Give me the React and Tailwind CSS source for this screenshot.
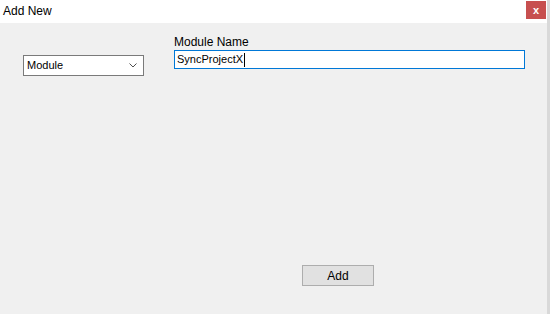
export default function App() {
  return (
    <div className="flex w-[550px] h-[314px] overflow-hidden font-['Liberation_Sans',Arial,sans-serif] text-black">
      <div className="flex flex-1 flex-col">
        <div className="flex h-[23px] items-start justify-between bg-white">
          <div className="pl-[3px] pt-[4px] text-[12px] leading-[15px]">Add New</div>
          <div className="mr-[1px] mt-[1px] flex h-[18px] w-[20px] items-center justify-center bg-[#c75050] text-[11px] font-bold leading-none text-white">
            x
          </div>
        </div>
        <div className="flex flex-1 flex-col bg-[#f0f0f0]">
          <div className="flex pl-[23px] pt-[11px]">
            <div className="mt-[21px] flex h-[21px] w-[121px] items-center justify-between border border-[#7a7a7a] bg-white pl-[3px] pr-[6px] text-[11px]">
              <span>Module</span>
              <svg width="8" height="5" viewBox="0 0 8 5" fill="none">
                <path d="M0.5 0.5 L4 4 L7.5 0.5" stroke="#505050" strokeWidth="1" />
              </svg>
            </div>
            <div className="ml-[30px] flex flex-col">
              <div className="text-[12px] leading-[16px]">Module Name</div>
              <div className="flex h-[19px] w-[351px] items-center border border-[#0078d7] bg-white pl-[2px] text-[11px]">
                <span>SyncProjectX</span>
                <span className="ml-[1px] h-[14px] w-px bg-black"></span>
              </div>
            </div>
          </div>
          <div className="flex-1"></div>
          <div className="pb-[28px] pl-[302px]">
            <div className="flex h-[21px] w-[72px] items-center justify-center border border-[#adadad] bg-[#e1e1e1] text-[12px]">
              Add
            </div>
          </div>
        </div>
      </div>
      <div className="w-[3px] bg-[#d9d9d9]"></div>
    </div>
  );
}
